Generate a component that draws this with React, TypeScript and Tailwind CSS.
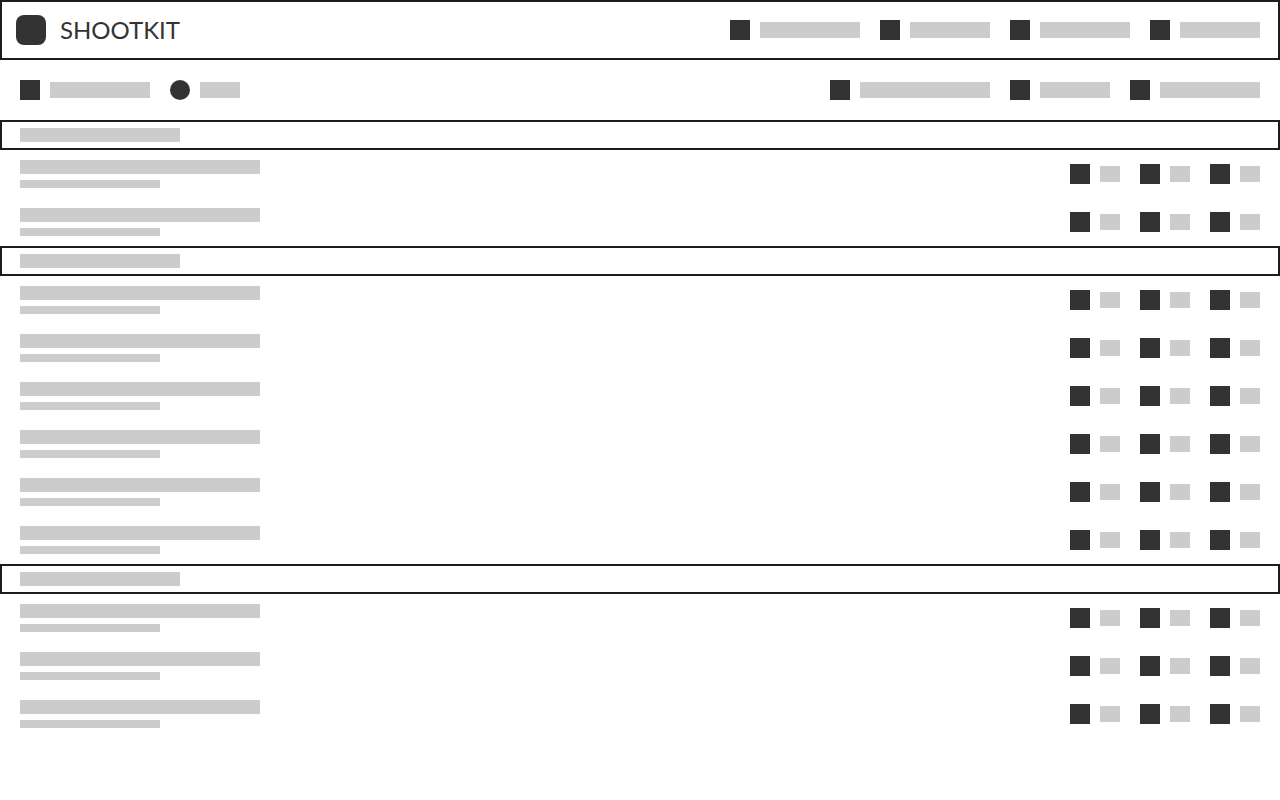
import React from 'react';
import clsx from 'clsx';

type ItemProps = {
  width: string;
  round?: boolean;
};

const navItems = ['w-[100px]', 'w-20', 'w-[90px]', 'w-20'];
const toolbarItems = ['w-[130px]', 'w-[70px]', 'w-[100px]'];
const rowItems = ['w-5', 'w-5', 'w-5'];

// Number of rows in each group of the list
const groups = [2, 6, 3];

const Item = ({ width, round = false }: ItemProps) => (
  <li className="flex items-center gap-2.5">
    <span className={clsx('size-5 shrink-0 bg-[#333333]', round && 'rounded-full')} />
    <span className={clsx('h-4 bg-[#cccccc]', width)} />
  </li>
);

const ItemList = ({ items }: { items: string[] }) => (
  <ul className="flex items-center gap-5">
    {items.map((width, i) => (
      <Item key={i} width={width} />
    ))}
  </ul>
);

const Header = () => (
  <header className="flex items-center justify-between border-2 border-[#1e1c1e] h-[60px] pl-3.5 pr-[18px]">
    <div className="flex items-center gap-3.5">
      <span className="size-[30px] rounded-lg bg-[#333333]" />
      <h1 className="font-['Lato',sans-serif] text-2xl text-[#333333]">SHOOTKIT</h1>
    </div>
    <nav>
      <ItemList items={navItems} />
    </nav>
  </header>
);

const Toolbar = () => (
  <div className="flex items-center justify-between px-5 h-[60px]">
    <ul className="flex items-center gap-5">
      <Item width="w-[100px]" />
      <Item width="w-10" round />
    </ul>
    <ItemList items={toolbarItems} />
  </div>
);

const Row = () => (
  <li className="flex items-center justify-between px-5 py-2.5">
    <div className="flex flex-col gap-1.5">
      <span className="h-3.5 w-60 bg-[#cccccc]" />
      <span className="h-2 w-[140px] bg-[#cccccc]" />
    </div>
    <ItemList items={rowItems} />
  </li>
);

const Group = ({ rows }: { rows: number }) => (
  <section>
    <div className="border-2 border-[#1e1c1e] px-[18px] py-1.5">
      <div className="h-3.5 w-40 bg-[#cccccc]" />
    </div>
    <ul>
      {Array.from({ length: rows }, (_, i) => (
        <Row key={i} />
      ))}
    </ul>
  </section>
);

const App = () => {
  return (
    <div className="min-h-screen bg-white">
      <Header />
      <Toolbar />
      <main>
        {groups.map((rows, i) => (
          <Group key={i} rows={rows} />
        ))}
      </main>
    </div>
  );
};

export default App;
